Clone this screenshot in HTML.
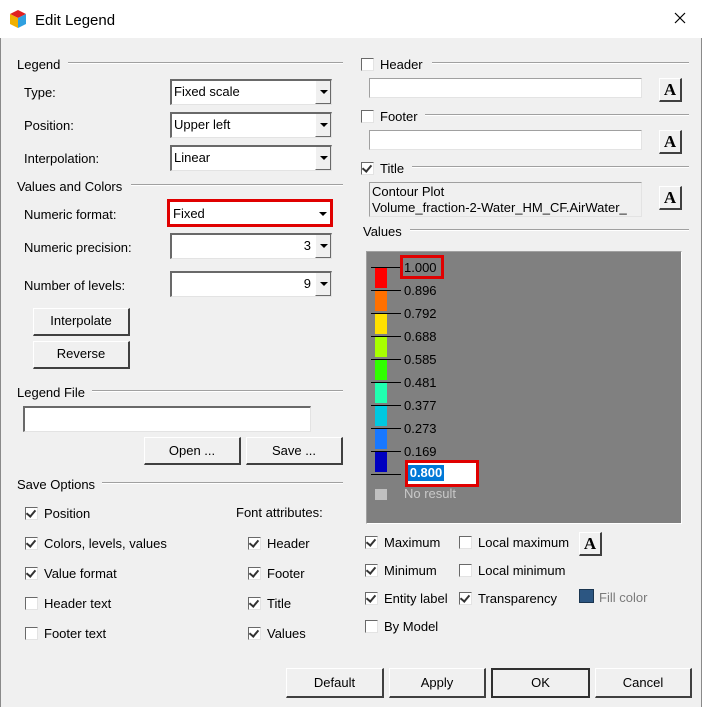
<!DOCTYPE html>
<html><head><style>
*{margin:0;padding:0;box-sizing:border-box}
body{width:702px;height:707px;background:#f0f0f0;font-family:"Liberation Sans",Arial,sans-serif;font-size:13px;color:#000;position:relative;overflow:hidden}
.a{position:absolute;white-space:nowrap}
.t{position:absolute;line-height:15px;white-space:nowrap}
.ln{position:absolute;height:1px;background:#a0a0a0;border-bottom:1px solid #fff;height:2px}
.combo{position:absolute;background:#fff;border-top:2px solid #696969;border-left:2px solid #696969;border-right:1px solid #e3e3e3;border-bottom:1px solid #e3e3e3}
.combo .v{position:absolute;left:2px;top:3px}
.combo .dd{position:absolute;right:0;top:0;bottom:0;width:16px;background:#f0f0f0;border-left:1px solid #fff;border-right:1px solid #696969;border-bottom:1px solid #696969}
.combo .dd:after{content:"";position:absolute;left:4px;top:9px;border-left:4px solid transparent;border-right:4px solid transparent;border-top:4px solid #000}
.btn{position:absolute;background:#f0f0f0;border-top:1px solid #fff;border-left:1px solid #fff;border-right:2px solid #404040;border-bottom:2px solid #404040;text-align:center}
.cb{position:absolute;width:13px;height:13px;background:#fff;border-top:1px solid #696969;border-left:1px solid #696969;border-right:1px solid #e3e3e3;border-bottom:1px solid #e3e3e3}
.cb.k:after{content:"";position:absolute;left:2px;top:0px;width:4px;height:7px;border-right:2px solid #333;border-bottom:2px solid #333;transform:rotate(40deg)}
.inp{position:absolute;background:#fff;border-top:1px solid #a0a0a0;border-left:1px solid #a0a0a0;border-right:1px solid #e3e3e3;border-bottom:1px solid #e3e3e3}
.A{position:absolute;width:23px;height:24px;border-top:1px solid #fff;border-left:1px solid #fff;border-right:2px solid #404040;border-bottom:2px solid #404040;font-family:"Liberation Serif",serif;font-weight:bold;font-size:17px;text-align:center;line-height:21px}
.bar{position:absolute;left:375px;width:12px;height:20px}
.tk{position:absolute;left:371px;width:30px;height:1px;background:#000}
.lv{position:absolute;left:404px;font-size:13px;line-height:14px}
</style></head><body>
<div class="a" style="left:0;top:0;width:702px;height:38px;background:#fff"></div>
<div class="a" style="left:0;top:38px;width:1px;height:669px;background:#8a8a8a"></div>
<div class="a" style="left:701px;top:38px;width:1px;height:669px;background:#8a8a8a"></div>
<svg class="a" style="left:9px;top:9px" width="18" height="20" viewBox="0 0 18 20"><polygon points="9,1 17,5 9,9 1,5" fill="#e02020"/><polygon points="1,5 9,9 9,19 1,15" fill="#f0b000"/><polygon points="17,5 9,9 9,19 17,15" fill="#30a0e0"/></svg>
<div class="t" style="left:35px;top:12px;font-size:15px;line-height:17px">Edit Legend</div>
<svg class="a" style="left:674px;top:12px" width="12" height="12"><path d="M1 1L11 11M11 1L1 11" stroke="#000" stroke-width="1.2"/></svg>

<div class="t" style="left:17px;top:57px">Legend</div><div class="ln" style="left:68px;top:62px;width:275px"></div>
<div class="t" style="left:24px;top:85px">Type:</div>
<div class="combo" style="left:170px;top:79px;width:162px;height:26px"><span class="v">Fixed scale</span><span class="dd"></span></div>
<div class="t" style="left:24px;top:118px">Position:</div>
<div class="combo" style="left:170px;top:112px;width:162px;height:26px"><span class="v">Upper left</span><span class="dd"></span></div>
<div class="t" style="left:24px;top:151px">Interpolation:</div>
<div class="combo" style="left:170px;top:145px;width:162px;height:26px"><span class="v">Linear</span><span class="dd"></span></div>
<div class="t" style="left:17px;top:179px">Values and Colors</div><div class="ln" style="left:131px;top:184px;width:212px"></div>
<div class="t" style="left:24px;top:207px">Numeric format:</div>
<div class="a" style="left:167px;top:199px;width:166px;height:28px;border:3px solid #e00000;background:#fff"><span class="a" style="left:3px;top:4px">Fixed</span><span class="a" style="right:0;top:0;width:14px;height:22px"></span><span class="a" style="right:3px;top:10px;border-left:4px solid transparent;border-right:4px solid transparent;border-top:4px solid #000"></span></div>
<div class="t" style="left:24px;top:240px">Numeric precision:</div>
<div class="combo" style="left:170px;top:233px;width:162px;height:26px"><span class="v" style="left:auto;right:20px">3</span><span class="dd"></span></div>
<div class="t" style="left:24px;top:278px">Number of levels:</div>
<div class="combo" style="left:170px;top:271px;width:162px;height:26px"><span class="v" style="left:auto;right:20px">9</span><span class="dd"></span></div>
<div class="btn" style="left:33px;top:308px;width:97px;height:28px;line-height:24px">Interpolate</div>
<div class="btn" style="left:33px;top:341px;width:97px;height:28px;line-height:24px">Reverse</div>
<div class="t" style="left:17px;top:385px">Legend File</div><div class="ln" style="left:92px;top:390px;width:251px"></div>
<div class="combo" style="left:23px;top:406px;width:288px;height:26px"></div>
<div class="btn" style="left:144px;top:437px;width:97px;height:28px;line-height:25px">Open ...</div>
<div class="btn" style="left:246px;top:437px;width:97px;height:28px;line-height:25px">Save ...</div>
<div class="t" style="left:17px;top:477px">Save Options</div><div class="ln" style="left:102px;top:482px;width:241px"></div>
<div class="cb k" style="left:25px;top:207px;top:507px"></div><div class="t" style="left:44px;top:506px">Position</div>
<div class="cb k" style="left:25px;top:537px"></div><div class="t" style="left:44px;top:536px">Colors, levels, values</div>
<div class="cb k" style="left:25px;top:567px"></div><div class="t" style="left:44px;top:566px">Value format</div>
<div class="cb" style="left:25px;top:597px"></div><div class="t" style="left:44px;top:596px">Header text</div>
<div class="cb" style="left:25px;top:627px"></div><div class="t" style="left:44px;top:626px">Footer text</div>
<div class="t" style="left:236px;top:505px">Font attributes:</div>
<div class="cb k" style="left:248px;top:537px"></div><div class="t" style="left:267px;top:536px">Header</div>
<div class="cb k" style="left:248px;top:567px"></div><div class="t" style="left:267px;top:566px">Footer</div>
<div class="cb k" style="left:248px;top:597px"></div><div class="t" style="left:267px;top:596px">Title</div>
<div class="cb k" style="left:248px;top:627px"></div><div class="t" style="left:267px;top:626px">Values</div>

<div class="cb" style="left:361px;top:58px"></div><div class="t" style="left:380px;top:57px">Header</div><div class="ln" style="left:432px;top:62px;width:257px"></div>
<div class="inp" style="left:369px;top:78px;width:273px;height:20px"></div>
<div class="A" style="left:659px;top:78px">A</div>
<div class="cb" style="left:361px;top:110px"></div><div class="t" style="left:380px;top:109px">Footer</div><div class="ln" style="left:425px;top:114px;width:264px"></div>
<div class="inp" style="left:369px;top:130px;width:273px;height:20px"></div>
<div class="A" style="left:659px;top:130px">A</div>
<div class="cb k" style="left:361px;top:162px"></div><div class="t" style="left:380px;top:161px">Title</div><div class="ln" style="left:412px;top:166px;width:277px"></div>
<div class="inp" style="left:369px;top:182px;width:273px;height:35px;background:#f0f0f0;font-size:13px;line-height:16px;padding:1px 2px;overflow:hidden">Contour Plot<br>Volume_fraction-2-Water_HM_CF.AirWater_</div>
<div class="A" style="left:659px;top:186px">A</div>
<div class="t" style="left:363px;top:224px">Values</div><div class="ln" style="left:410px;top:229px;width:279px"></div>

<div class="a" style="left:366px;top:251px;width:316px;height:273px;border:1px solid #a0a0a0;border-right-color:#fff;border-bottom-color:#fff;background:#808080"></div>
<div class="bar" style="top:268px;background:#ff0000"></div>
<div class="bar" style="top:291px;background:#ff7000"></div>
<div class="bar" style="top:314px;background:#ffe000"></div>
<div class="bar" style="top:337px;background:#a8ff00"></div>
<div class="bar" style="top:360px;background:#30ff00"></div>
<div class="bar" style="top:383px;background:#20ffb0"></div>
<div class="bar" style="top:406px;background:#00c8e0"></div>
<div class="bar" style="top:429px;background:#1878ff"></div>
<div class="bar" style="top:452px;background:#0000c0"></div>
<div class="tk" style="top:267px"></div><div class="tk" style="top:290px"></div><div class="tk" style="top:313px"></div><div class="tk" style="top:336px"></div><div class="tk" style="top:359px"></div><div class="tk" style="top:382px"></div><div class="tk" style="top:405px"></div><div class="tk" style="top:428px"></div><div class="tk" style="top:451px"></div><div class="tk" style="top:474px"></div>
<div class="a" style="left:400px;top:255px;width:44px;height:24px;border:3px solid #e00000"></div>
<div class="lv" style="top:261px">1.000</div>
<div class="lv" style="top:284px">0.896</div>
<div class="lv" style="top:307px">0.792</div>
<div class="lv" style="top:330px">0.688</div>
<div class="lv" style="top:353px">0.585</div>
<div class="lv" style="top:376px">0.481</div>
<div class="lv" style="top:399px">0.377</div>
<div class="lv" style="top:422px">0.273</div>
<div class="lv" style="top:445px">0.169</div>
<div class="a" style="left:405px;top:460px;width:74px;height:27px;border:3px solid #e00000;background:#fff"></div>
<div class="a" style="left:408px;top:465px;width:36px;height:16px;background:#0078d7;color:#fff;font-weight:bold;font-size:13px;line-height:16px;text-align:center">0.800</div>
<div class="a" style="left:375px;top:489px;width:12px;height:11px;background:#c0c0c0"></div>
<div class="lv" style="top:487px;color:#c8c8c8">No result</div>

<div class="cb k" style="left:365px;top:536px"></div><div class="t" style="left:384px;top:535px">Maximum</div>
<div class="cb" style="left:459px;top:536px"></div><div class="t" style="left:478px;top:535px">Local maximum</div>
<div class="A" style="left:579px;top:532px">A</div>
<div class="cb k" style="left:365px;top:564px"></div><div class="t" style="left:384px;top:563px">Minimum</div>
<div class="cb" style="left:459px;top:564px"></div><div class="t" style="left:478px;top:563px">Local minimum</div>
<div class="cb k" style="left:365px;top:592px"></div><div class="t" style="left:384px;top:591px">Entity label</div>
<div class="cb k" style="left:459px;top:592px"></div><div class="t" style="left:478px;top:591px">Transparency</div>
<div class="a" style="left:579px;top:589px;width:15px;height:14px;background:#2c5682;border:1px solid #1a3550"></div><div class="t" style="left:599px;top:590px;color:#7a7a7a">Fill color</div>
<div class="cb" style="left:365px;top:620px"></div><div class="t" style="left:384px;top:619px">By Model</div>

<div class="btn" style="left:286px;top:668px;width:98px;height:30px;line-height:27px">Default</div>
<div class="btn" style="left:389px;top:668px;width:97px;height:30px;line-height:27px">Apply</div>
<div class="a" style="left:491px;top:668px;width:99px;height:30px;border:2px solid #303030;text-align:center;line-height:26px">OK</div>
<div class="btn" style="left:595px;top:668px;width:97px;height:30px;line-height:27px">Cancel</div>
</body></html>
